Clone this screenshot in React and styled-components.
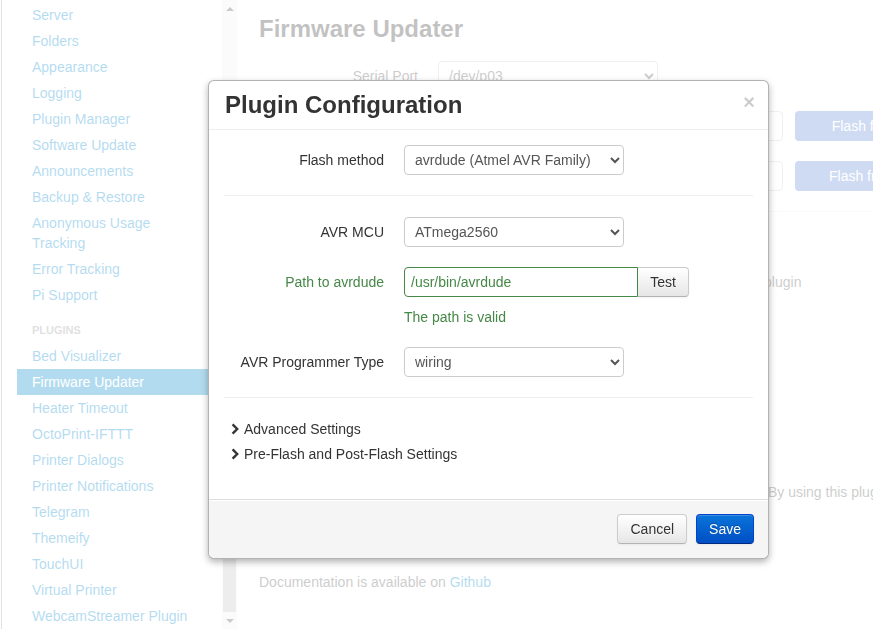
import React from 'react'
import styled, { createGlobalStyle } from 'styled-components'

const GlobalStyle = createGlobalStyle`
  html, body {
    margin: 0;
    padding: 0;
    height: 100%;
    overflow: hidden;
    background: #fff;
  }
  body {
    font-family: "Liberation Sans", Arial, Helvetica, sans-serif;
    font-size: 14px;
    line-height: 20px;
    color: #333;
  }
  * {
    box-sizing: border-box;
  }
`

const coreItems = [
  'Server', 'Folders', 'Appearance', 'Logging', 'Plugin Manager', 'Software Update',
  'Announcements', 'Backup & Restore', 'Anonymous Usage Tracking', 'Error Tracking', 'Pi Support'
]

const pluginItems = [
  'Bed Visualizer', 'Firmware Updater', 'Heater Timeout', 'OctoPrint-IFTTT', 'Printer Dialogs',
  'Printer Notifications', 'Telegram', 'Themeify', 'TouchUI', 'Virtual Printer', 'WebcamStreamer Plugin'
]

const Chevron = () => (
  <svg width="8" height="12" viewBox="0 0 8 12">
    <path d="M1.6 1.4 L6.2 6 L1.6 10.6" fill="none" stroke="#333" strokeWidth="2.4" />
  </svg>
)

const App = () => {
  return (
    <>
      <GlobalStyle />
      <Page>
        <Sidebar>
          <NavList>
            {coreItems.map(item => (
              <li key={item}><NavLink>{item}</NavLink></li>
            ))}
            <NavHeader>Plugins</NavHeader>
            {pluginItems.map(item => (
              <li key={item}>
                <NavLink $active={item === 'Firmware Updater'}>{item}</NavLink>
              </li>
            ))}
          </NavList>
        </Sidebar>
        <ScrollTrack>
          <ScrollArrow $dir="up" />
          <ScrollSpace />
          <ScrollThumb />
          <ScrollArrow $dir="down" />
        </ScrollTrack>

        <Main>
          <Content>
            <PageTitle>Firmware Updater</PageTitle>
            <FormRow>
              <RowLabel>Serial Port</RowLabel>
              <FadedSelect defaultValue="p03">
                <option value="p03">/dev/p03</option>
              </FadedSelect>
            </FormRow>
            <FormRow>
              <RowLabel>Flash from file</RowLabel>
              <FadedInput />
              <FlashButton>Flash from File</FlashButton>
            </FormRow>
            <FormRow>
              <RowLabel>Flash from URL</RowLabel>
              <FadedInput />
              <FlashButton>Flash from URL</FlashButton>
            </FormRow>
            <PageRule />
            <PageText $mt={60}>
              Before you can flash the firmware you need to configure the flash settings of this  plugin
            </PageText>
            <PageText $mt={190}>
              Flashing a firmware can go wrong and may leave the printer in an unusable state. By using this plugin you accept the risk.
            </PageText>
            <PageText $mt={70}>
              Documentation is available on <PageLink>Github</PageLink>
            </PageText>
          </Content>
        </Main>
      </Page>

      <Backdrop />

      <Modal>
        <ModalHeader>
          <ModalTitle>Plugin Configuration</ModalTitle>
          <CloseButton>×</CloseButton>
        </ModalHeader>
        <ModalBody>
          <ControlGroup>
            <ControlLabel>Flash method</ControlLabel>
            <Controls>
              <Select defaultValue="avrdude">
                <option value="avrdude">avrdude (Atmel AVR Family)</option>
              </Select>
            </Controls>
          </ControlGroup>
          <Divider />
          <ControlGroup>
            <ControlLabel>AVR MCU</ControlLabel>
            <Controls>
              <Select defaultValue="m2560">
                <option value="m2560">ATmega2560</option>
              </Select>
            </Controls>
          </ControlGroup>
          <ControlGroup>
            <ControlLabel $success>Path to avrdude</ControlLabel>
            <Controls>
              <InputAppend>
                <PathInput defaultValue="/usr/bin/avrdude" />
                <AddonButton>Test</AddonButton>
              </InputAppend>
              <HelpBlock>The path is valid</HelpBlock>
            </Controls>
          </ControlGroup>
          <ControlGroup>
            <ControlLabel>AVR Programmer Type</ControlLabel>
            <Controls>
              <Select defaultValue="wiring">
                <option value="wiring">wiring</option>
              </Select>
            </Controls>
          </ControlGroup>
          <Divider />
          <Toggles>
            <Toggle><Chevron />Advanced Settings</Toggle>
            <Toggle><Chevron />Pre-Flash and Post-Flash Settings</Toggle>
          </Toggles>
        </ModalBody>
        <ModalFooter>
          <Button>Cancel</Button>
          <Button $primary>Save</Button>
        </ModalFooter>
      </Modal>
    </>
  )
}

export default App

const Page = styled.div`
  display: flex;
  height: 100vh;
  padding-left: 1px;
`

const Sidebar = styled.nav`
  width: 221px;
  height: calc(100vh - 8px);
  border-left: 1px solid #999;
  overflow: hidden;
  flex-shrink: 0;
`

const NavList = styled.ul`
  list-style: none;
  margin: 0;
  padding: 2px 0 0 15px;
`

const NavLink = styled.a`
  display: block;
  padding: 3px 20px 3px 15px;
  line-height: 20px;
  color: ${props => props.$active ? '#fff' : '#0088cc'};
  background: ${props => props.$active ? '#0088cc' : 'transparent'};
  text-decoration: none;
  cursor: pointer;
`

const NavHeader = styled.li`
  margin-top: 9px;
  padding: 3px 15px;
  font-size: 11px;
  font-weight: bold;
  line-height: 20px;
  color: #999;
  text-transform: uppercase;
`

const ScrollTrack = styled.div`
  width: 15px;
  height: calc(100vh - 8px);
  display: flex;
  flex-direction: column;
  background: #f1f1f1;
  flex-shrink: 0;
`

const ScrollArrow = styled.div`
  height: 17px;
  display: flex;
  align-items: center;
  justify-content: center;

  &:after {
    content: "";
    border-left: 4px solid transparent;
    border-right: 4px solid transparent;
    ${props => props.$dir === 'up'
      ? 'border-bottom: 4px solid #505050;'
      : 'border-top: 4px solid #505050;'}
  }
`

const ScrollSpace = styled.div`
  flex: 1;
`

const ScrollThumb = styled.div`
  height: 296px;
  margin: 0 1px;
  background: #c1c1c1;
`

const Main = styled.main`
  flex: 1;
  min-width: 0;
  overflow: hidden;
  padding: 14px 0 0 21px;
`

const Content = styled.div`
  width: 900px;
`

const PageTitle = styled.h3`
  margin: 0 0 17px 1px;
  font-size: 24px;
  line-height: 30px;
  font-weight: bold;
  color: #333;
`

const FormRow = styled.div`
  display: flex;
  align-items: flex-start;
  margin-bottom: 20px;
`

const RowLabel = styled.label`
  width: 160px;
  margin-right: 20px;
  padding-top: 5px;
  text-align: right;
  color: #555;
  flex-shrink: 0;
`

const FadedSelect = styled.select`
  width: 220px;
  height: 30px;
  padding: 4px 6px;
  border: 1px solid #ccc;
  border-radius: 4px;
  background: #fff;
  color: #555;
  font-family: inherit;
  font-size: 14px;
`

const FadedInput = styled.input`
  width: 345px;
  height: 30px;
  border: 1px solid #ccc;
  border-radius: 4px;
  background: #fff;
`

const FlashButton = styled.button`
  width: 166px;
  height: 30px;
  margin-left: 12px;
  border: 0;
  border-radius: 4px;
  background: #5a85d6;
  color: #fff;
  font-family: inherit;
  font-size: 14px;
`

const PageRule = styled.hr`
  margin: 0 0 20px;
  border: 0;
  border-top: 1px solid #eee;
`

const PageText = styled.p`
  margin: ${props => props.$mt}px 0 0 1px;
  color: #555;
  white-space: pre;
`

const PageLink = styled.a`
  color: #0088cc;
`

const Backdrop = styled.div`
  position: fixed;
  inset: 0;
  background: rgba(255, 255, 255, 0.7);
  z-index: 1040;
`

const Modal = styled.div`
  position: fixed;
  top: 80px;
  left: 208px;
  width: 561px;
  z-index: 1050;
  background: #fff;
  border: 1px solid rgba(0, 0, 0, 0.3);
  border-radius: 6px;
  box-shadow: 0 3px 7px rgba(0, 0, 0, 0.3);
`

const ModalHeader = styled.div`
  display: flex;
  align-items: center;
  justify-content: space-between;
  padding: 9px 15px 9px 16px;
  border-bottom: 1px solid #eee;
`

const ModalTitle = styled.h3`
  margin: 0;
  font-size: 24px;
  line-height: 30px;
  font-weight: bold;
  color: #333;
`

const CloseButton = styled.span`
  margin: -6px -2px 0 0;
  font-size: 20px;
  font-weight: bold;
  line-height: 20px;
  color: #000;
  opacity: 0.2;
  cursor: pointer;
`

const ModalBody = styled.div`
  padding: 15px;
`

const ControlGroup = styled.div`
  display: flex;
  margin-bottom: 20px;
`

const ControlLabel = styled.label`
  width: 160px;
  padding-top: 5px;
  text-align: right;
  color: ${props => props.$success ? '#468847' : '#333'};
  flex-shrink: 0;
`

const Controls = styled.div`
  margin-left: 20px;
`

const Select = styled.select`
  display: block;
  width: 220px;
  height: 30px;
  padding: 4px 6px;
  border: 1px solid #ccc;
  border-radius: 4px;
  background: #fff;
  color: #555;
  font-family: inherit;
  font-size: 14px;
`

const InputAppend = styled.div`
  display: flex;
`

const PathInput = styled.input`
  width: 234px;
  height: 30px;
  padding: 4px 6px;
  border: 1px solid #468847;
  border-radius: 4px 0 0 4px;
  color: #468847;
  font-family: inherit;
  font-size: 14px;
  outline: none;
`

const Button = styled.button`
  height: 30px;
  padding: 4px 12px;
  font-family: inherit;
  font-size: 14px;
  line-height: 20px;
  border-radius: 4px;
  cursor: pointer;
  color: ${props => props.$primary ? '#fff' : '#333'};
  text-shadow: ${props => props.$primary ? '0 -1px 0 rgba(0,0,0,.25)' : '0 1px 1px rgba(255,255,255,.75)'};
  background: ${props => props.$primary
    ? 'linear-gradient(to bottom, #0a74d9, #004fc4)'
    : 'linear-gradient(to bottom, #fff, #e6e6e6)'};
  border: 1px solid ${props => props.$primary ? '#0044cc' : '#ccc'};
  border-bottom-color: ${props => props.$primary ? '#002a80' : '#b3b3b3'};
  box-shadow: inset 0 1px 0 rgba(255,255,255,.2), 0 1px 2px rgba(0,0,0,.05);
`

const AddonButton = styled(Button)`
  width: 51px;
  border-left: 0;
  border-radius: 0 4px 4px 0;
`

const HelpBlock = styled.div`
  margin-top: 10px;
  color: #468847;
`

const Divider = styled.hr`
  margin: 0 0 21px;
  border: 0;
  border-top: 1px solid #eee;
`

const Toggles = styled.div`
  margin: -3px 0 18px;
`

const Toggle = styled.div`
  display: flex;
  align-items: center;
  gap: 5px;
  height: 25px;
  padding-left: 7px;
  color: #333;
  cursor: pointer;
`

const ModalFooter = styled.div`
  display: flex;
  justify-content: flex-end;
  gap: 9px;
  padding: 14px 14px 14px 15px;
  background: #f5f5f5;
  border-top: 1px solid #ddd;
  border-radius: 0 0 6px 6px;
  box-shadow: inset 0 1px 0 #fff;
`
